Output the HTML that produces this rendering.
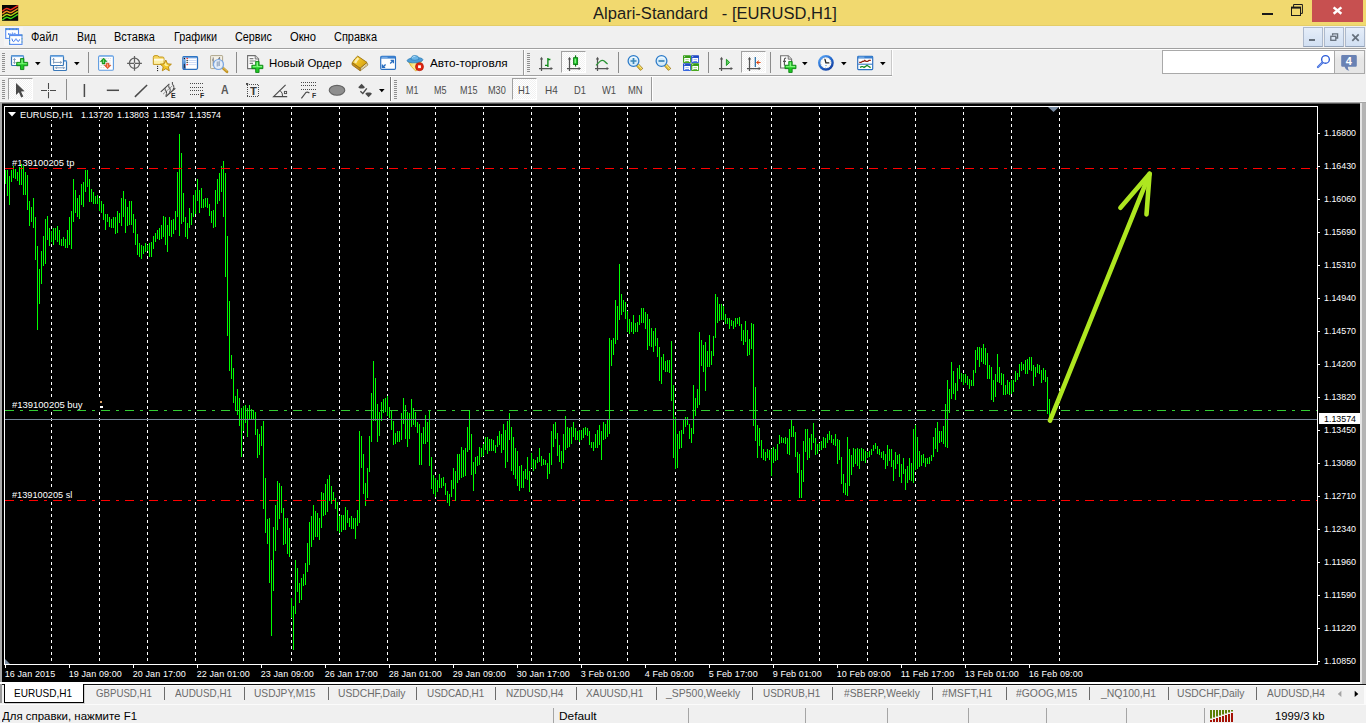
<!DOCTYPE html>
<html lang="ru"><head><meta charset="utf-8"><title>Alpari-Standard - [EURUSD,H1]</title>
<style>
html,body{margin:0;padding:0}
body{width:1366px;height:723px;overflow:hidden;background:#f0f0f0;position:relative;font-family:"Liberation Sans", sans-serif}
.t{position:absolute;white-space:pre;transform-origin:0 50%;display:block}
.abs{position:absolute}
svg{position:absolute;overflow:visible}

</style></head><body>
<div class="abs" style="left:0;top:0;width:1366px;height:26px;background:#f1d96f"></div>
<div class="abs" style="left:0;top:25px;width:1366px;height:1px;background:#e4cd68"></div>
<svg style="left:2px;top:5px" width="16" height="16" viewBox="0 0 16 16"><rect width="16.2" height="15.8" fill="#050505"/><path d="M0.3 6.2L3.2 4Q4.9 2.9 6.4 3.9Q8.4 5.3 10 4.2L15.9 0.6" stroke="#f0301c" stroke-width="1.45" fill="none"/><path d="M0.3 9.1L3.2 6.9Q4.9 5.8 6.4 6.8Q8.4 8.2 10 7.1L15.9 3.5" stroke="#f08a1e" stroke-width="1.45" fill="none"/><path d="M0.3 12.0L3.2 9.8Q4.9 8.7 6.4 9.7Q8.4 11.1 10 10.0L15.9 6.3999999999999995" stroke="#b4d414" stroke-width="1.45" fill="none"/><path d="M0.3 15.0L3.2 12.8Q4.9 11.700000000000001 6.4 12.700000000000001Q8.4 14.100000000000001 10 13.0L15.9 9.4" stroke="#3fd818" stroke-width="1.45" fill="none"/></svg>
<span class="t " style="left:592.50px;top:5.20px;font-size:16.3px;line-height:16.3px;color:#1c1c1c;transform:scaleX(1.0168);">Alpari-Standard   - [EURUSD,H1]</span>
<div class="abs" style="left:1262px;top:13px;width:11px;height:2px;background:#1a1a1a"></div>
<svg style="left:1290px;top:3px" width="14" height="14" viewBox="0 0 14 14"><path d="M3.6 4V1.5H12.4V10.4H10.6" fill="none" stroke="#1a1a1a" stroke-width="1"/><rect x="1.5" y="4.5" width="9" height="8" fill="none" stroke="#1a1a1a" stroke-width="1"/><rect x="1" y="3.6" width="10" height="2" fill="#1a1a1a"/></svg>
<div class="abs" style="left:1312px;top:0;width:51px;height:22px;background:#c75050"></div>
<svg style="left:1332px;top:6px" width="11" height="9" viewBox="0 0 11 9"><path d="M1.6 1.4L9.4 7.7M9.4 1.4L1.6 7.7" stroke="#fff" stroke-width="2.5"/></svg>
<div class="abs" style="left:0;top:26px;width:1366px;height:22px;background:#f0f0f0"></div>
<div class="abs" style="left:0;top:48px;width:1366px;height:1px;background:#a0a0a0"></div>
<div class="abs" style="left:0;top:49px;width:1366px;height:1px;background:#fff"></div>
<div class="abs" style="left:4px;top:27px;width:19px;height:19px;background:#f5f5f5"></div><svg style="left:5px;top:28px" width="18" height="17" viewBox="0 0 18 17"><rect x="0.7" y="0.6" width="12.8" height="9.8" fill="#fff" stroke="#5a8cf0" stroke-width="1.1"/><rect x="0.7" y="0.4" width="12.8" height="1.7" fill="#5a8cf0"/><path d="M0.7 1.2H13.5" stroke="#3aa05a" stroke-width="1.2" stroke-dasharray="1 2.4" opacity=".7"/><path d="M3.2 6H6.2M4 5L3 6L4 7M7.4 4.4V7.6M8.6 5.4H10.6" stroke="#5a8cf0" stroke-width=".9" fill="none"/><rect x="4.6" y="6.8" width="12.4" height="9.6" fill="#fff" stroke="#5a8cf0" stroke-width="1.1"/><rect x="4.6" y="6.6" width="12.4" height="1.5" fill="#5a8cf0"/><path d="M4.6 16.4V6.8M17 6.8V16.4" stroke="#3aa05a" stroke-width="1.1" stroke-dasharray="1 2.4" opacity=".6"/><path d="M6.9 10.6Q7.6 14 8.7 13.6Q9.6 13.4 10.4 11.4Q11 10 11.6 11.4Q12.4 13.6 13.2 13.6Q14 13.4 14.6 11.4" stroke="#3f78ee" stroke-width="1" fill="none"/></svg>
<span class="t " style="left:31.00px;top:31.44px;font-size:12px;line-height:12px;color:#000;transform:scaleX(0.9148);">Файл</span>
<span class="t " style="left:77.00px;top:31.44px;font-size:12px;line-height:12px;color:#000;transform:scaleX(0.8748);">Вид</span>
<span class="t " style="left:114.00px;top:31.44px;font-size:12px;line-height:12px;color:#000;transform:scaleX(0.9191);">Вставка</span>
<span class="t " style="left:174.00px;top:31.44px;font-size:12px;line-height:12px;color:#000;transform:scaleX(0.9014);">Графики</span>
<span class="t " style="left:235.00px;top:31.44px;font-size:12px;line-height:12px;color:#000;transform:scaleX(0.9004);">Сервис</span>
<span class="t " style="left:290.00px;top:31.44px;font-size:12px;line-height:12px;color:#000;transform:scaleX(0.9322);">Окно</span>
<span class="t " style="left:334.00px;top:31.44px;font-size:12px;line-height:12px;color:#000;transform:scaleX(0.9134);">Справка</span>
<div class="abs" style="left:1303px;top:27px;width:18px;height:18px;background:linear-gradient(#e6eef9,#dbe6f5 50%,#d2e0f3);border:1px solid #adb9cc;border-bottom-color:#94a3b9"></div>
<div class="abs" style="left:1324px;top:27px;width:18px;height:18px;background:linear-gradient(#e6eef9,#dbe6f5 50%,#d2e0f3);border:1px solid #adb9cc;border-bottom-color:#94a3b9"></div>
<div class="abs" style="left:1345px;top:27px;width:18px;height:18px;background:linear-gradient(#e6eef9,#dbe6f5 50%,#d2e0f3);border:1px solid #adb9cc;border-bottom-color:#94a3b9"></div>
<div class="abs" style="left:1309px;top:39px;width:6px;height:2px;background:#66707c"></div>
<svg style="left:1330px;top:33px" width="9" height="9" viewBox="0 0 9 9"><path d="M2.6 2.6V0.8H7.6V5H6" fill="none" stroke="#66707c" stroke-width="1.3"/><rect x="0.8" y="3.3" width="5" height="4" fill="none" stroke="#66707c" stroke-width="1.3"/></svg>
<svg style="left:1351px;top:33px" width="9" height="9" viewBox="0 0 9 9"><path d="M1.3 1.4L7.7 7.9M7.7 1.4L1.3 7.9" stroke="#66707c" stroke-width="1.7"/></svg>
<div class="abs" style="left:0;top:75px;width:892px;height:1px;background:#a0a0a0"></div>
<div class="abs" style="left:0;top:76px;width:892px;height:1px;background:#fff"></div>
<svg style="left:2px;top:53px" width="3" height="20" viewBox="0 0 3 20" shape-rendering="crispEdges"><rect x="0" y="0" width="3" height="1" fill="#8f8f8f"/><rect x="0" y="2" width="3" height="1" fill="#8f8f8f"/><rect x="0" y="4" width="3" height="1" fill="#8f8f8f"/><rect x="0" y="6" width="3" height="1" fill="#8f8f8f"/><rect x="0" y="8" width="3" height="1" fill="#8f8f8f"/><rect x="0" y="10" width="3" height="1" fill="#8f8f8f"/><rect x="0" y="12" width="3" height="1" fill="#8f8f8f"/><rect x="0" y="14" width="3" height="1" fill="#8f8f8f"/><rect x="0" y="16" width="3" height="1" fill="#8f8f8f"/><rect x="0" y="18" width="3" height="1" fill="#8f8f8f"/></svg>
<svg style="left:11px;top:54px" width="18" height="17" viewBox="0 0 18 17"><rect x="0.5" y="1.5" width="12" height="10" rx="1" fill="#fff" stroke="#3a78b8" stroke-width="1.2"/><rect x="0.5" y="1.5" width="12" height="1.6" fill="#7db2ea"/><path d="M3.5 4.6V9.6M2.2 5.9L3.5 4.6L4.8 5.9M2.2 8.3L3.5 9.6L4.8 8.3" stroke="#7d95b3" stroke-width=".9" fill="none"/><g transform="translate(4.7,4.0) scale(1.06)"><path d="M4.5 0.5H7.7V4.1H11.3V7.3H7.7V10.9H4.5V7.3H0.9V4.1H4.5Z" fill="#1fc824" stroke="#0b7f12" stroke-width="0.8" stroke-linejoin="round"/><path d="M5.3 1.3H6.7V4.9H10.5V6H5.3Z" fill="#8dfb8a" opacity=".9"/><path d="M1.7 4.9H5.3V6H1.7Z" fill="#8dfb8a" opacity=".9"/></g></svg>
<svg style="left:34.5px;top:62px" width="6" height="4" viewBox="0 0 6 4"><path d="M0 0H5.6L2.8 3.2Z" fill="#000"/></svg>
<svg style="left:50px;top:54px" width="18" height="18" viewBox="0 0 18 18"><rect x="3.5" y="6.5" width="13" height="10" rx="1" fill="#fff" stroke="#3a78b8" stroke-width="1.2"/><rect x="3.5" y="6.5" width="13" height="1.4" fill="#7db2ea"/><rect x="0.5" y="1.5" width="13" height="10" rx="1" fill="#fff" stroke="#3a78b8" stroke-width="1.2"/><rect x="0.5" y="1.5" width="13" height="1.6" fill="#7db2ea"/><path d="M3.6 4.4V9.6M3.6 8.4H11.6M2.4 5.6L3.6 4.4L4.8 5.6M10.4 7.2L11.6 8.4L10.4 9.6" stroke="#6f8fb3" stroke-width=".9" fill="none"/><path d="M5.6 13.8H14.4M6.8 12.6L5.6 13.8L6.8 15M13.2 12.6L14.4 13.8L13.2 15" stroke="#6f8fb3" stroke-width=".9" fill="none"/></svg>
<svg style="left:73.5px;top:62px" width="6" height="4" viewBox="0 0 6 4"><path d="M0 0H5.6L2.8 3.2Z" fill="#000"/></svg>
<div class="abs" style="left:88px;top:52px;width:1px;height:21px;background:#8c8c8c"></div>
<svg style="left:98px;top:54px" width="17" height="18" viewBox="0 0 17 18"><rect x="0.6" y="1.7" width="14.8" height="14.6" rx="1.4" fill="#fff" stroke="#5e9be0" stroke-width="1.1"/><rect x="1" y="1.6" width="14" height="1.2" fill="#7fb1ea"/><path d="M2.4 4.6H13M8.6 6.8H13M8.6 9H13M2.4 11.4H6M2.4 13.6H6.4" stroke="#d4d4d4" stroke-width=".8" stroke-dasharray="1.6 .8"/><path d="M5.6 4L9 7.6H7V10H4.2V7.6H2.2Z" fill="#12a31a" stroke="#0a7a10" stroke-width=".5"/><path d="M5.6 5.6V9" stroke="#8be08c" stroke-width=".9"/><path d="M9.6 14.8L6.2 11.2H8.2V9.2H11V11.2H13Z" fill="#f0582a" stroke="#c03c14" stroke-width=".5"/><path d="M9.6 10.2V13.2" stroke="#fbb79e" stroke-width=".9"/></svg>
<svg style="left:126px;top:55px" width="17" height="17" viewBox="0 0 17 17"><circle cx="8.5" cy="8.3" r="5.1" fill="none" stroke="#606060" stroke-width="1.25"/><path d="M8.5 0.9V15.7M1.1 8.3H15.9" stroke="#606060" stroke-width="1.25"/><rect x="8" y="7.8" width="1" height="1" fill="#d8d8d8"/></svg>
<svg style="left:152px;top:54px" width="20" height="18" viewBox="0 0 20 18"><path d="M1.3 3.4Q1.3 1.6 3 1.6H5.2Q6.4 1.6 6.8 3H10.6Q12 3 12 4.4V10.4H1.3Z" fill="#f6d35c" stroke="#c49a22" stroke-width="1"/><path d="M2 4.8H11.4V9.8H2Z" fill="#fdf0a8"/><path d="M2 4.8H11.4V6.6H2Z" fill="#fffbe2"/><rect x="5" y="11.8" width="1.1" height="1.1" fill="#222"/><rect x="5" y="13.9" width="1.1" height="1.1" fill="#222"/><rect x="5" y="16" width="1.1" height="1.1" fill="#222"/><path d="M13.8 6L15.5 9.8L19.4 10.2L16.4 12.8L17.3 16.8L13.8 14.7L10.3 16.8L11.2 12.8L8.2 10.2L12.1 9.8Z" fill="#f1c528" stroke="#b5860e" stroke-width=".9" stroke-linejoin="round"/><path d="M13.8 8.2L14.7 10.7L16.8 10.9L15.2 12.3L13.6 11.9L12.2 10.8Z" fill="#fdf0a0"/></svg>
<svg style="left:182px;top:55px" width="17" height="16" viewBox="0 0 17 16"><defs><linearGradient id="tg" x1="0" y1="0" x2="0" y2="1"><stop offset="0" stop-color="#9cc4f2"/><stop offset=".55" stop-color="#3f86d8"/><stop offset="1" stop-color="#1d4f9c"/></linearGradient></defs><rect x="0.9" y="1.5" width="14.6" height="12.8" rx="1.2" fill="#fff" stroke="#2a6fc0" stroke-width="1.25"/><rect x="0.9" y="1.3" width="14.6" height="1.3" fill="#2f78c8"/><rect x="1.4" y="2.4" width="2.3" height="11.4" fill="url(#tg)"/><rect x="1.8" y="2.9" width="1.2" height="1.2" fill="#111"/><rect x="1.8" y="9" width="1.2" height="3.8" fill="#23364f"/><path d="M5.6 3.5H14.6M5.6 5.5H14.6M5.6 7.5H14.6M5.6 9.6H14.6" stroke="#c9d9f6" stroke-width=".9"/><rect x="4.5" y="2.9" width="1.3" height="1.2" fill="#f01818"/><rect x="4.5" y="9" width="1.3" height="1.2" fill="#f01818"/><rect x="4.5" y="4.9" width="1.3" height="1.2" fill="#2a3a2a"/><rect x="4.5" y="6.9" width="1.3" height="1.2" fill="#2a3a2a"/></svg>
<svg style="left:210px;top:54px" width="19" height="19" viewBox="0 0 19 19"><rect x="0.6" y="1.6" width="12" height="13" rx=".6" fill="#f4f0e6" stroke="#aea58c" stroke-width="1"/><path d="M3.2 3.4V12M2 6H3.2M3.2 8.4H4.6M9.6 3V9M9.6 4.4H8.2M9.6 7H11" stroke="#707070" stroke-width=".9" fill="none"/><path d="M12.6 13.8L17 17.8" stroke="#c29322" stroke-width="2.7" stroke-linecap="round"/><path d="M12.8 13.4L16.6 16.8" stroke="#ecd27a" stroke-width=".8" stroke-linecap="round"/><circle cx="8.5" cy="10.5" r="5" fill="#e3eefb" fill-opacity=".86" stroke="#78a6e6" stroke-width="1.15"/><path d="M7.4 7.6V12.6M9.2 7.2V12" stroke="#a2b2c8" stroke-width="1.6"/></svg>
<div class="abs" style="left:236px;top:52px;width:1px;height:21px;background:#8c8c8c"></div>
<svg style="left:247px;top:54px" width="18" height="19" viewBox="0 0 18 19"><path d="M0.6 1.6H8.2L11.6 5V14.6H0.6Z" fill="#fdfdfd" stroke="#6f6f6f" stroke-width="1.1"/><path d="M8.2 1.6V5H11.6" fill="#d8d8d8" stroke="#6f6f6f" stroke-width=".9"/><path d="M2.6 4.6H6.4M2.6 7H9M2.6 9.4H6" stroke="#7c7c7c" stroke-width="1.1"/><g transform="translate(3.9,6.9) scale(1.06)"><path d="M4.5 0.5H7.7V4.1H11.3V7.3H7.7V10.9H4.5V7.3H0.9V4.1H4.5Z" fill="#1fc824" stroke="#0b7f12" stroke-width="0.8" stroke-linejoin="round"/><path d="M5.3 1.3H6.7V4.9H10.5V6H5.3Z" fill="#8dfb8a" opacity=".9"/><path d="M1.7 4.9H5.3V6H1.7Z" fill="#8dfb8a" opacity=".9"/></g></svg>
<span class="t " style="left:268.50px;top:57.99px;font-size:11px;line-height:11px;color:#000;transform:scaleX(1.0386);">Новый Ордер</span>
<svg style="left:351px;top:55px" width="18" height="17" viewBox="0 0 18 17"><defs><linearGradient id="bk" x1="0" y1="0" x2="1" y2="0.6"><stop offset="0" stop-color="#fff0a0"/><stop offset=".35" stop-color="#f2c62a"/><stop offset="1" stop-color="#d9a514"/></linearGradient></defs><path d="M9.2 13.2L16 7.6L16.9 10L9.2 15.8Z" fill="#f3ead0" stroke="#8a6a1c" stroke-width=".7" stroke-linejoin="round"/><path d="M9.9 14.2L16.3 9.1" stroke="#b9a56a" stroke-width=".6"/><path d="M1.3 7.6Q0.6 9 1.4 10.2L9.2 15.8L9.2 13.1Z" fill="#c8901a" stroke="#8f6510" stroke-width=".8" stroke-linejoin="round"/><path d="M6.7 1.1L16 7.4L9.1 13.1L1.3 7.6Q3.6 3.4 6.7 1.1Z" fill="url(#bk)" stroke="#9a7210" stroke-width=".9" stroke-linejoin="round"/><path d="M6.6 2.6Q4.4 4.6 3 7.2L5.2 8.6Q6.4 5.6 8.4 3.8Z" fill="#fff8cf" opacity=".8"/></svg>
<svg style="left:380px;top:55px" width="17" height="16" viewBox="0 0 17 16"><rect x="0.7" y="1.4" width="14.8" height="13" rx="1.1" fill="#fff" stroke="#2a6fc0" stroke-width="1.15"/><rect x="0.8" y="1.2" width="14.6" height="2.4" fill="#3b80d0"/><rect x="1.6" y="1.9" width="6" height=".7" fill="#9cc4f0"/><path d="M10.2 8.4L13.2 5.6M10.6 5.4H13.4V8.2M5.6 9.4L2.6 12.2M2.4 9.6V12.4H5.2" stroke="#2a6fc0" stroke-width="1.35" fill="none"/></svg>
<svg style="left:406px;top:54px" width="19" height="18" viewBox="0 0 19 18"><defs><linearGradient id="fc" x1="0" y1="0" x2="1" y2="0"><stop offset="0" stop-color="#f6cf3c"/><stop offset=".45" stop-color="#fdec96"/><stop offset="1" stop-color="#ecbc24"/></linearGradient></defs><path d="M2.2 7.2Q4.6 12.6 9.4 16.8Q10 17.2 10.6 16.6Q14 12 15.4 7.2Z" fill="url(#fc)" stroke="#d8a826" stroke-width=".8" stroke-linejoin="round"/><ellipse cx="9" cy="6.2" rx="7.9" ry="2.6" fill="#4f9cd6" stroke="#2f7fb8" stroke-width=".8" transform="rotate(-4 9 6.2)"/><path d="M5 5.6Q5 1.4 9 1.4Q13 1.4 13 5.4Q9 7.2 5 5.6Z" fill="#6cb6e8" stroke="#2f7fb8" stroke-width=".7"/><path d="M6.4 3.6Q7.4 2.2 9.4 2.2" stroke="#b4dcf6" stroke-width="1" fill="none"/><circle cx="13.5" cy="12.7" r="4" fill="#e02410" stroke="#b01404" stroke-width=".7"/><rect x="12.1" y="11.3" width="2.8" height="2.8" fill="#fff"/></svg>
<span class="t " style="left:430.00px;top:57.99px;font-size:11px;line-height:11px;color:#000;transform:scaleX(1.0683);">Авто-торговля</span>
<div class="abs" style="left:523px;top:50px;width:1px;height:25px;background:#9a9a9a"></div>
<div class="abs" style="left:524px;top:50px;width:1px;height:25px;background:#fff"></div>
<svg style="left:527px;top:53px" width="3" height="20" viewBox="0 0 3 20" shape-rendering="crispEdges"><rect x="0" y="0" width="3" height="1" fill="#8f8f8f"/><rect x="0" y="2" width="3" height="1" fill="#8f8f8f"/><rect x="0" y="4" width="3" height="1" fill="#8f8f8f"/><rect x="0" y="6" width="3" height="1" fill="#8f8f8f"/><rect x="0" y="8" width="3" height="1" fill="#8f8f8f"/><rect x="0" y="10" width="3" height="1" fill="#8f8f8f"/><rect x="0" y="12" width="3" height="1" fill="#8f8f8f"/><rect x="0" y="14" width="3" height="1" fill="#8f8f8f"/><rect x="0" y="16" width="3" height="1" fill="#8f8f8f"/><rect x="0" y="18" width="3" height="1" fill="#8f8f8f"/></svg>
<svg style="left:539px;top:55px" width="16" height="17" viewBox="0 0 16 17"><path d="M2.5 3V16M0 13.5H13" stroke="#555" stroke-width="1.25" fill="none"/><path d="M2.5 1.8L0.9 4.4H4.1Z" fill="#555"/><path d="M14 13.5L11.6 11.9V15.1Z" fill="#555"/><path d="M8.9 3V12M8.9 4.5H11.4M8.9 10.4H6" stroke="#0d8a16" stroke-width="1.35" fill="none"/></svg>
<div class="abs" style="left:561px;top:51px;width:23px;height:20px;background-image:repeating-conic-gradient(#fff 0 25%,#f1f1f1 0 50%);background-size:2px 2px;border-left:1px solid #a0a0a0;border-top:1px solid #a0a0a0;border-right:1px solid #fff;border-bottom:1px solid #fff;box-sizing:content-box"></div>
<svg style="left:567px;top:55px" width="16" height="17" viewBox="0 0 16 17"><path d="M2.5 3V16M0 13.5H13" stroke="#555" stroke-width="1.25" fill="none"/><path d="M2.5 1.8L0.9 4.4H4.1Z" fill="#555"/><path d="M14 13.5L11.6 11.9V15.1Z" fill="#555"/><path d="M8.55 0.3V11.6" stroke="#0a7a12" stroke-width="1.2"/><rect x="6.6" y="2.7" width="4" height="6.8" fill="#15bb1f" stroke="#0a7a12" stroke-width=".9"/><rect x="7.5" y="3.6" width="1.6" height="4.6" fill="#7ff082"/></svg>
<svg style="left:595px;top:55px" width="16" height="17" viewBox="0 0 16 17"><path d="M2.5 3V16M0 13.5H13" stroke="#555" stroke-width="1.25" fill="none"/><path d="M2.5 1.8L0.9 4.4H4.1Z" fill="#555"/><path d="M14 13.5L11.6 11.9V15.1Z" fill="#555"/><path d="M1 10.4Q3.6 7.8 5 6.4Q7.2 4.4 9.2 6Q11 7.8 12.6 9" stroke="#2a9434" stroke-width="1.15" fill="none"/></svg>
<div class="abs" style="left:618px;top:52px;width:1px;height:21px;background:#8c8c8c"></div>
<svg style="left:627px;top:54px" width="18" height="18" viewBox="0 0 18 18"><path d="M10.2 10.6L14.8 15.6" stroke="#8a6410" stroke-width="3.6" stroke-linecap="butt"/><path d="M10.2 10.6L14.6 15.4" stroke="#e8c83a" stroke-width="2.4" stroke-linecap="butt"/><path d="M10.6 10.2L14.8 14.8" stroke="#fbf0a8" stroke-width=".8"/><circle cx="6.5" cy="7" r="5.4" fill="#d6ecfa" stroke="#2c7ac8" stroke-width="1.25"/><path d="M3.2 4.6Q6.5 2 9.8 4.6" stroke="#f2fafe" stroke-width="1.2" fill="none"/><path d="M3.5 7H9.5M6.5 4V10" stroke="#3a86b8" stroke-width="1.7"/></svg>
<svg style="left:655px;top:54px" width="18" height="18" viewBox="0 0 18 18"><path d="M10.2 10.6L14.8 15.6" stroke="#8a6410" stroke-width="3.6" stroke-linecap="butt"/><path d="M10.2 10.6L14.6 15.4" stroke="#e8c83a" stroke-width="2.4" stroke-linecap="butt"/><path d="M10.6 10.2L14.8 14.8" stroke="#fbf0a8" stroke-width=".8"/><circle cx="6.5" cy="7" r="5.4" fill="#d6ecfa" stroke="#2c7ac8" stroke-width="1.25"/><path d="M3.2 4.6Q6.5 2 9.8 4.6" stroke="#f2fafe" stroke-width="1.2" fill="none"/><path d="M3.5 7H9.5" stroke="#3a86b8" stroke-width="1.7"/></svg>
<svg style="left:683px;top:55px" width="17" height="17" viewBox="0 0 17 17"><defs><linearGradient id="g02" x1="0" y1="0" x2="0" y2="1"><stop offset="0" stop-color="#2f9a12"/><stop offset="1" stop-color="#4aaa20"/></linearGradient></defs><rect x="0" y="0.2" width="7.9" height="7.8" rx=".7" fill="url(#g02)"/><rect x="1.1" y="1.2" width="1" height=".9" fill="#fff" opacity=".85"/><path d="M1.2 3.1H7V7.0H6V6.2H2.2V7.0H1.2Z" fill="#fff"/><path d="M2.4 4.6000000000000005H5.8" stroke="#9ad47e" stroke-width=".9"/><defs><linearGradient id="g812" x1="0" y1="0" x2="0" y2="1"><stop offset="0" stop-color="#1a44c0"/><stop offset="1" stop-color="#3a6ae0"/></linearGradient></defs><rect x="8.1" y="0.2" width="7.9" height="7.8" rx=".7" fill="url(#g812)"/><rect x="9.2" y="1.2" width="1" height=".9" fill="#fff" opacity=".85"/><path d="M9.299999999999999 3.1H15.1V7.0H14.1V6.2H10.3V7.0H9.299999999999999Z" fill="#fff"/><path d="M10.5 4.6000000000000005H13.899999999999999" stroke="#9ab4ee" stroke-width=".9"/><defs><linearGradient id="g082" x1="0" y1="0" x2="0" y2="1"><stop offset="0" stop-color="#1a44c0"/><stop offset="1" stop-color="#3a6ae0"/></linearGradient></defs><rect x="0" y="8.2" width="7.9" height="7.8" rx=".7" fill="url(#g082)"/><rect x="1.1" y="9.2" width="1" height=".9" fill="#fff" opacity=".85"/><path d="M1.2 11.1H7V15.0H6V14.2H2.2V15.0H1.2Z" fill="#fff"/><path d="M2.4 12.6H5.8" stroke="#9ab4ee" stroke-width=".9"/><defs><linearGradient id="g8182" x1="0" y1="0" x2="0" y2="1"><stop offset="0" stop-color="#2f9a12"/><stop offset="1" stop-color="#4aaa20"/></linearGradient></defs><rect x="8.1" y="8.2" width="7.9" height="7.8" rx=".7" fill="url(#g8182)"/><rect x="9.2" y="9.2" width="1" height=".9" fill="#fff" opacity=".85"/><path d="M9.299999999999999 11.1H15.1V15.0H14.1V14.2H10.3V15.0H9.299999999999999Z" fill="#fff"/><path d="M10.5 12.6H13.899999999999999" stroke="#9ad47e" stroke-width=".9"/></svg>
<div class="abs" style="left:708px;top:52px;width:1px;height:21px;background:#8c8c8c"></div>
<svg style="left:719px;top:55px" width="16" height="17" viewBox="0 0 16 17"><path d="M2.5 3V16M0 13.5H13" stroke="#555" stroke-width="1.25" fill="none"/><path d="M2.5 1.8L0.9 4.4H4.1Z" fill="#555"/><path d="M14 13.5L11.6 11.9V15.1Z" fill="#555"/><path d="M7.4 4.3L10.6 7.4L7.4 10.5Z" fill="#5fd05f" stroke="#1f9a26" stroke-width="1" stroke-linejoin="round"/></svg>
<div class="abs" style="left:741px;top:51px;width:23px;height:20px;background-image:repeating-conic-gradient(#fff 0 25%,#f1f1f1 0 50%);background-size:2px 2px;border-left:1px solid #a0a0a0;border-top:1px solid #a0a0a0;border-right:1px solid #fff;border-bottom:1px solid #fff;box-sizing:content-box"></div>
<svg style="left:747px;top:55px" width="16" height="17" viewBox="0 0 16 17"><path d="M2.5 3V16M0 13.5H13" stroke="#555" stroke-width="1.25" fill="none"/><path d="M2.5 1.8L0.9 4.4H4.1Z" fill="#555"/><path d="M14 13.5L11.6 11.9V15.1Z" fill="#555"/><path d="M8.3 2.1V12" stroke="#1f6aa6" stroke-width="1.2"/><path d="M9.6 7.5H13.6" stroke="#de4a14" stroke-width="1.1"/><path d="M9.1 7.5L11.9 5.1L11.2 7.5L11.9 9.9Z" fill="#de4a14"/></svg>
<div class="abs" style="left:770px;top:52px;width:1px;height:21px;background:#8c8c8c"></div>
<svg style="left:780px;top:54px" width="18" height="19" viewBox="0 0 18 19"><path d="M0.6 1.8H8.2L11.6 5.2V14H0.6Z" fill="#fdfdfd" stroke="#6f6f6f" stroke-width="1.1"/><path d="M8.2 1.8V5.2H11.6" fill="#d8d8d8" stroke="#6f6f6f" stroke-width=".9"/><path d="M6.2 4.2Q4.4 3.8 4.4 6V11.5M3 7.4H6" stroke="#555" stroke-width="1.1" fill="none"/><g transform="translate(4.0,6.9) scale(1.06)"><path d="M4.5 0.5H7.7V4.1H11.3V7.3H7.7V10.9H4.5V7.3H0.9V4.1H4.5Z" fill="#1fc824" stroke="#0b7f12" stroke-width="0.8" stroke-linejoin="round"/><path d="M5.3 1.3H6.7V4.9H10.5V6H5.3Z" fill="#8dfb8a" opacity=".9"/><path d="M1.7 4.9H5.3V6H1.7Z" fill="#8dfb8a" opacity=".9"/></g></svg>
<svg style="left:801.5px;top:62px" width="6" height="4" viewBox="0 0 6 4"><path d="M0 0H5.6L2.8 3.2Z" fill="#000"/></svg>
<svg style="left:817px;top:54px" width="18" height="18" viewBox="0 0 18 18"><defs><linearGradient id="ck" x1="0.1" y1="0" x2="0.9" y2="1"><stop offset="0" stop-color="#5aa4f4"/><stop offset=".5" stop-color="#2268cc"/><stop offset="1" stop-color="#173f9e"/></linearGradient></defs><circle cx="8.9" cy="8.8" r="6.7" fill="#fcfcfc" stroke="url(#ck)" stroke-width="2.4"/><circle cx="8.9" cy="8.8" r="5" fill="none" stroke="#9a9a9a" stroke-width=".8" stroke-dasharray=".7 1.92"/><path d="M8.9 8.9L8 5.4M8.9 8.9H11.8" stroke="#222" stroke-width="1.3" fill="none" stroke-linecap="round"/><path d="M8.2 11.6H9.8" stroke="#6aa6f0" stroke-width=".9"/></svg>
<svg style="left:840.5px;top:62px" width="6" height="4" viewBox="0 0 6 4"><path d="M0 0H5.6L2.8 3.2Z" fill="#000"/></svg>
<svg style="left:857px;top:55px" width="17" height="16" viewBox="0 0 17 16"><rect x="0.7" y="1.4" width="15" height="13.2" rx=".8" fill="#fff" stroke="#2a6fc0" stroke-width="1.15"/><rect x="0.8" y="1.2" width="14.8" height="2.3" fill="#3b80d0"/><rect x="1.8" y="1.8" width="5.6" height=".7" fill="#a4caf2"/><path d="M1.2 9.2H15.2" stroke="#2a6fc0" stroke-width="1"/><path d="M2.2 7.4H4L5.4 6.4H6.6L7.8 5.4L9 6.4H10.6L12 5.4H13.8" stroke="#8e1c0a" stroke-width="1.25" fill="none"/><path d="M3 12.4L4.6 11.6H5.8L7 12.4L8.6 11.4L10 10.2L11.4 11.2L13.6 12.6" stroke="#148a22" stroke-width="1.25" fill="none"/></svg>
<svg style="left:879.5px;top:62px" width="6" height="4" viewBox="0 0 6 4"><path d="M0 0H5.6L2.8 3.2Z" fill="#000"/></svg>
<div class="abs" style="left:891px;top:50px;width:1px;height:25px;background:#c9c9c9"></div>
<div class="abs" style="left:892px;top:50px;width:1px;height:25px;background:#fff"></div>
<svg style="left:2px;top:80px" width="3" height="20" viewBox="0 0 3 20" shape-rendering="crispEdges"><rect x="0" y="0" width="3" height="1" fill="#8f8f8f"/><rect x="0" y="2" width="3" height="1" fill="#8f8f8f"/><rect x="0" y="4" width="3" height="1" fill="#8f8f8f"/><rect x="0" y="6" width="3" height="1" fill="#8f8f8f"/><rect x="0" y="8" width="3" height="1" fill="#8f8f8f"/><rect x="0" y="10" width="3" height="1" fill="#8f8f8f"/><rect x="0" y="12" width="3" height="1" fill="#8f8f8f"/><rect x="0" y="14" width="3" height="1" fill="#8f8f8f"/><rect x="0" y="16" width="3" height="1" fill="#8f8f8f"/><rect x="0" y="18" width="3" height="1" fill="#8f8f8f"/></svg>
<div class="abs" style="left:8px;top:78px;width:23px;height:20px;background-image:repeating-conic-gradient(#fff 0 25%,#f1f1f1 0 50%);background-size:2px 2px;border-left:1px solid #a0a0a0;border-top:1px solid #a0a0a0;border-right:1px solid #fff;border-bottom:1px solid #fff;box-sizing:content-box"></div>
<svg style="left:14px;top:82px" width="12" height="17" viewBox="0 0 12 17"><path d="M2 1V13L4.9 10.3L7.2 15.4L9.3 14.4L7 9.5L10.6 9.2Z" fill="#4a4a4a"/></svg>
<svg style="left:40px;top:82px" width="17" height="17" viewBox="0 0 17 17"><path d="M8.5 1V7M8.5 10V16.2M1 8.5H7M10 8.5H16" stroke="#4a4a4a" stroke-width="1.05"/><rect x="8" y="8" width="1" height="1" fill="#4a4a4a"/></svg>
<div class="abs" style="left:66px;top:79px;width:1px;height:21px;background:#8c8c8c"></div>
<svg style="left:83px;top:83px" width="3" height="15" viewBox="0 0 3 15"><path d="M1.4 1V14" stroke="#4a4a4a" stroke-width="1.5"/></svg>
<svg style="left:106px;top:89px" width="14" height="3" viewBox="0 0 14 3"><path d="M0.8 1.3H13" stroke="#4a4a4a" stroke-width="1.5"/></svg>
<svg style="left:134px;top:84px" width="15" height="14" viewBox="0 0 15 14"><path d="M0.9 12.9L13.1 1" stroke="#4a4a4a" stroke-width="1.5"/></svg>
<svg style="left:160px;top:81px" width="18" height="19" viewBox="0 0 18 19"><path d="M0.8 10.9L9.4 2.9M5.7 15.7L15.3 7.3" stroke="#4a4a4a" stroke-width="1.15"/><path d="M3 13.2L12.6 4.6" stroke="#4a4a4a" stroke-width=".7" opacity=".75"/><path d="M5.2 7.4Q4.6 10.4 6.4 10.2Q7.2 12.6 5.8 14.6M8.8 4.4Q8.2 7.4 10 7.2Q10.8 9.6 9.4 11.6M12.4 1Q11.8 4.4 13.6 4.2Q14.4 6.6 13 8.6" stroke="#4a4a4a" stroke-width="1" fill="none"/></svg>
<span class="t " style="left:171.30px;top:93.41px;font-size:6.6px;line-height:6.6px;color:#222;font-weight:bold;transform:scaleX(1.0440);">E</span>
<svg style="left:190px;top:83px" width="15" height="14" viewBox="0 0 15 14" shape-rendering="crispEdges"><path d="M0 0.5H13" stroke="#4a4a4a" stroke-width="1.1" stroke-dasharray="1 1"/><path d="M0 4.5H13" stroke="#4a4a4a" stroke-width="1.1" stroke-dasharray="1 1"/><path d="M0 7.5H13" stroke="#4a4a4a" stroke-width="1.1" stroke-dasharray="1 1"/><path d="M0 11.5H9" stroke="#4a4a4a" stroke-width="1.1" stroke-dasharray="1 1"/></svg>
<span class="t " style="left:199.90px;top:93.41px;font-size:6.6px;line-height:6.6px;color:#222;font-weight:bold;transform:scaleX(1.0419);">F</span>
<span class="t " style="left:221.00px;top:84.47px;font-size:12.2px;line-height:12.2px;color:#585858;font-weight:bold;transform:scaleX(0.8624);">A</span>
<svg style="left:246px;top:83px" width="14" height="15" viewBox="0 0 14 15"><path d="M1 1.5H13M1 13.5H13M1.5 2V13M12.5 2V13" fill="none" stroke="#4a4a4a" stroke-width="1" stroke-dasharray="1 1" shape-rendering="crispEdges"/><rect x="0" y="0" width="2.2" height="1.9" fill="#4a4a4a"/></svg>
<span class="t " style="left:249.50px;top:85.69px;font-size:11px;line-height:11px;color:#3a3a3a;font-weight:bold;transform:scaleX(1.0394);">T</span>
<svg style="left:272px;top:84px" width="17" height="14" viewBox="0 0 17 14"><path d="M13.6 0.8L1.6 12.6H15.2" stroke="#4a4a4a" stroke-width="1.15" fill="none" stroke-linejoin="miter"/><path d="M8.2 6.6Q10.8 8.8 10.6 12.4" stroke="#4a4a4a" stroke-width="1" fill="none"/><rect x="12.4" y="7.4" width="2.2" height="2.2" fill="#f0f0f0" stroke="#4a4a4a" stroke-width=".9"/></svg>
<svg style="left:301px;top:82px" width="16" height="9" viewBox="0 0 16 9" shape-rendering="crispEdges"><path d="M0 0.5H15" stroke="#4a4a4a" stroke-width="1" stroke-dasharray="1 1"/><path d="M0 3.5H15" stroke="#4a4a4a" stroke-width="1" stroke-dasharray="1 1"/><path d="M0 7.5H15" stroke="#4a4a4a" stroke-width="1" stroke-dasharray="1 1"/></svg>
<svg style="left:300px;top:91px" width="11" height="8" viewBox="0 0 11 8"><path d="M1.4 7.4L5.8 1.6Q7.4 0.6 9.4 2" stroke="#4a4a4a" stroke-width="1.15" fill="none"/></svg>
<span class="t " style="left:311.90px;top:93.24px;font-size:6.8px;line-height:6.8px;color:#333;font-weight:bold;transform:scaleX(1.0105);">F</span>
<svg style="left:328px;top:84px" width="18" height="13" viewBox="0 0 18 13"><ellipse cx="9" cy="6.3" rx="7.8" ry="4.9" fill="#8e8e8e" stroke="#646464" stroke-width="1.1"/></svg>
<svg style="left:357px;top:83px" width="17" height="15" viewBox="0 0 17 15"><path d="M4.6 0.8L8 4.2L6.4 5.6H2.8L1.2 4.2Z" fill="#4a4a4a"/><path d="M11.6 14.2L8.2 10.8L9.8 9.4H13.4L15 10.8Z" fill="#4a4a4a"/><path d="M3.4 8.2L5.8 10.4L9.8 5.4" stroke="#4a4a4a" stroke-width="1.4" fill="none"/></svg>
<svg style="left:378.5px;top:89px" width="6" height="4" viewBox="0 0 6 4"><path d="M0 0H5.6L2.8 3.2Z" fill="#000"/></svg>
<div class="abs" style="left:390px;top:77px;width:1px;height:25px;background:#7a7a7a"></div>
<div class="abs" style="left:391px;top:77px;width:1px;height:25px;background:#fff"></div>
<svg style="left:394px;top:80px" width="3" height="20" viewBox="0 0 3 20" shape-rendering="crispEdges"><rect x="0" y="0" width="3" height="1" fill="#8f8f8f"/><rect x="0" y="2" width="3" height="1" fill="#8f8f8f"/><rect x="0" y="4" width="3" height="1" fill="#8f8f8f"/><rect x="0" y="6" width="3" height="1" fill="#8f8f8f"/><rect x="0" y="8" width="3" height="1" fill="#8f8f8f"/><rect x="0" y="10" width="3" height="1" fill="#8f8f8f"/><rect x="0" y="12" width="3" height="1" fill="#8f8f8f"/><rect x="0" y="14" width="3" height="1" fill="#8f8f8f"/><rect x="0" y="16" width="3" height="1" fill="#8f8f8f"/><rect x="0" y="18" width="3" height="1" fill="#8f8f8f"/></svg>
<div class="abs" style="left:512px;top:78px;width:23px;height:20px;background-image:repeating-conic-gradient(#fff 0 25%,#f1f1f1 0 50%);background-size:2px 2px;border-left:1px solid #a0a0a0;border-top:1px solid #a0a0a0;border-right:1px solid #fff;border-bottom:1px solid #fff;box-sizing:content-box"></div>
<span class="t " style="left:405.80px;top:85.11px;font-size:10.5px;line-height:10.5px;color:#4c4c4c;transform:scaleX(0.8497);">M1</span>
<span class="t " style="left:433.50px;top:85.11px;font-size:10.5px;line-height:10.5px;color:#4c4c4c;transform:scaleX(0.8565);">M5</span>
<span class="t " style="left:459.70px;top:85.11px;font-size:10.5px;line-height:10.5px;color:#4c4c4c;transform:scaleX(0.8563);">M15</span>
<span class="t " style="left:487.50px;top:85.11px;font-size:10.5px;line-height:10.5px;color:#4c4c4c;transform:scaleX(0.8709);">M30</span>
<span class="t " style="left:518.30px;top:85.11px;font-size:10.5px;line-height:10.5px;color:#4c4c4c;transform:scaleX(0.8930);">H1</span>
<span class="t " style="left:545.30px;top:85.11px;font-size:10.5px;line-height:10.5px;color:#4c4c4c;transform:scaleX(0.9451);">H4</span>
<span class="t " style="left:574.40px;top:85.11px;font-size:10.5px;line-height:10.5px;color:#4c4c4c;transform:scaleX(0.8856);">D1</span>
<span class="t " style="left:602.20px;top:85.11px;font-size:10.5px;line-height:10.5px;color:#4c4c4c;transform:scaleX(0.8952);">W1</span>
<span class="t " style="left:628.30px;top:85.11px;font-size:10.5px;line-height:10.5px;color:#4c4c4c;transform:scaleX(0.8933);">MN</span>
<div class="abs" style="left:651px;top:77px;width:1px;height:25px;background:#9a9a9a"></div>
<div class="abs" style="left:652px;top:77px;width:1px;height:25px;background:#fff"></div>
<div class="abs" style="left:1162px;top:50px;width:201px;height:22px;background:#fff;border:1px solid #a9a9a9"></div>
<div class="abs" style="left:1335px;top:51px;width:29px;height:22px;background:linear-gradient(#f3f3f3,#e6e6e6 40%,#e6e6e6);border-left:1px solid #a9a9a9;margin-left:-1px"></div>
<svg style="left:1316px;top:54px" width="15" height="15" viewBox="0 0 15 15"><path d="M6.8 8.3L2 13" stroke="#3a68dc" stroke-width="2.3" stroke-linecap="round"/><path d="M6.8 8.3L2 13" stroke="#9db4f0" stroke-width="1.6" stroke-dasharray=".6 .9"/><circle cx="9.5" cy="5.4" r="3.85" fill="#fff" stroke="#2c5cd8" stroke-width="1.35"/></svg>
<svg style="left:1340px;top:54px" width="18" height="18" viewBox="0 0 18 18"><path d="M2.4 1.1H15.6Q16.8 1.1 16.8 2.3V11.6Q16.8 12.8 15.6 12.8H7.8Q7.6 15.2 9.4 16.8Q5.6 16.4 4.6 12.8H2.4Q1.2 12.8 1.2 11.6V2.3Q1.2 1.1 2.4 1.1Z" fill="#6982b4"/></svg>
<span class="t " style="left:1345.70px;top:55.99px;font-size:11px;line-height:11px;color:#fff;font-weight:bold;">4</span>
<div class="abs" style="left:0;top:101px;width:1366px;height:1px;background:#f6f6f6"></div>
<div class="abs" style="left:0;top:102px;width:1366px;height:1px;background:#a6a6a6"></div>
<div class="abs" style="left:0;top:103px;width:1366px;height:1px;background:#555"></div>
<div class="abs" style="left:0;top:104px;width:1366px;height:578px;background:#000"></div>
<div class="abs" style="left:0;top:103px;width:2px;height:581px;background:#a8a8a8"></div>
<div class="abs" style="left:1360px;top:103px;width:2px;height:581px;background:#e3e3e3"></div>
<div class="abs" style="left:1362px;top:103px;width:4px;height:581px;background:#b4b4b4"></div>
<svg style="left:0;top:0" width="1366" height="723" viewBox="0 0 1366 723" shape-rendering="crispEdges">
<path d="M51.5 106V664M99.5 106V664M147.5 106V664M195.5 106V664M243.5 106V664M291.5 106V664M339.5 106V664M387.5 106V664M435.5 106V664M483.5 106V664M531.5 106V664M579.5 106V664M627.5 106V664M675.5 106V664M723.5 106V664M771.5 106V664M819.5 106V664M867.5 106V664M915.5 106V664M963.5 106V664M1011.5 106V664M1059.5 106V664" stroke="#fff" stroke-width="1" stroke-dasharray="3 3" fill="none"/>
</svg>
<div class="abs" style="left:19px;top:109px;width:203px;height:11px;background:#000"></div>
<span class="t " style="left:20.20px;top:111.08px;font-size:9px;line-height:9px;color:#fff;transform:scaleX(1.0228);">EURUSD,H1</span>
<span class="t " style="left:80.80px;top:111.08px;font-size:9px;line-height:9px;color:#fff;transform:scaleX(0.9832);">1.13720</span>
<span class="t " style="left:116.80px;top:111.08px;font-size:9px;line-height:9px;color:#fff;transform:scaleX(0.9771);">1.13803</span>
<span class="t " style="left:152.60px;top:111.08px;font-size:9px;line-height:9px;color:#fff;transform:scaleX(0.9832);">1.13547</span>
<span class="t " style="left:188.60px;top:111.08px;font-size:9px;line-height:9px;color:#fff;transform:scaleX(0.9832);">1.13574</span>
<svg style="left:8px;top:112px" width="8" height="5" viewBox="0 0 8 5"><path d="M0 0H8L4 4.4Z" fill="#fff"/></svg>
<div class="abs" style="left:10.6px;top:156.7px;width:66.4px;height:13px;background:#000"></div><span class="t " style="left:11.60px;top:159.08px;font-size:9px;line-height:9px;color:#fff;transform:scaleX(1.0389);">#139100205 tp</span>
<div class="abs" style="left:10.6px;top:398.7px;width:89.6px;height:13px;background:#000"></div><span class="t " style="left:11.60px;top:401.08px;font-size:9px;line-height:9px;color:#fff;transform:scaleX(1.0525);">#139100205 buy</span>
<div class="abs" style="left:100px;top:401px;width:2px;height:2px;background:#d9a066"></div><div class="abs" style="left:100px;top:406px;width:3px;height:2px;background:#fff"></div>
<div class="abs" style="left:10.6px;top:488.7px;width:64.4px;height:13px;background:#000"></div><span class="t " style="left:11.60px;top:491.08px;font-size:9px;line-height:9px;color:#fff;transform:scaleX(1.0226);">#139100205 sl</span>
<svg style="left:0;top:0" width="1366" height="723" viewBox="0 0 1366 723" shape-rendering="crispEdges">
<path d="M5.5 170V184M7.5 170V196M9.5 176V205M11.5 170V182M13.5 166V178M15.5 169V179M17.5 172V181M19.5 167V185M21.5 164V185M23.5 166V195M25.5 172V195M27.5 175V210M29.5 201V226M31.5 207V222M33.5 198V228M35.5 217V260M37.5 246V330M39.5 269V304M41.5 251V284M43.5 236V266M45.5 219V264M47.5 216V240M49.5 228V246M51.5 231V242M53.5 228V245M55.5 228V240M57.5 226V242M59.5 230V245M61.5 239V246M63.5 237V246M65.5 239V248M67.5 230V248M69.5 217V245M71.5 211V249M73.5 179V222M75.5 190V213M77.5 198V217M79.5 195V219M81.5 184V205M83.5 182V207M85.5 170V192M87.5 170V187M89.5 179V202M91.5 189V202M93.5 192V204M95.5 196V204M97.5 195V204M99.5 198V211M101.5 201V213M103.5 204V220M105.5 214V230M107.5 214V222M109.5 217V227M111.5 219V228M113.5 217V228M115.5 217V234M117.5 211V233M119.5 213V223M121.5 198V226M123.5 191V217M125.5 199V233M127.5 207V226M129.5 201V225M131.5 201V225M133.5 214V233M135.5 219V245M137.5 234V255M139.5 243V257M141.5 245V259M143.5 246V254M145.5 243V252M147.5 245V251M149.5 243V257M151.5 242V257M153.5 236V249M155.5 233V242M157.5 230V239M159.5 228V240M161.5 225V239M163.5 216V237M165.5 217V245M167.5 225V252M169.5 217V236M171.5 220V237M173.5 219V234M175.5 211V230M177.5 172V217M179.5 134V236M181.5 153V224M183.5 193V222M185.5 217V237M187.5 223V239M189.5 208V228M191.5 213V225M193.5 195V217M195.5 190V214M197.5 179V201M199.5 190V213M201.5 188V208M203.5 199V208M205.5 198V207M207.5 198V208M209.5 204V216M211.5 211V223M213.5 210V228M215.5 190V227M217.5 179V204M219.5 173V201M221.5 166V192M223.5 161V217M225.5 173V277M227.5 236V336M229.5 301V371M231.5 355V379M233.5 368V403M235.5 396V411M237.5 389V415M239.5 398V426M241.5 408V457M243.5 406V431M245.5 405V423M247.5 408V437M249.5 405V419M251.5 409V419M253.5 410V419M255.5 412V435M257.5 429V458M259.5 434V455M261.5 426V446M263.5 421V509M265.5 478V533M267.5 519V544M269.5 518V583M271.5 560V636M273.5 527V591M275.5 505V551M277.5 481V530M279.5 483V519M281.5 486V513M283.5 508V545M285.5 518V544M287.5 518V554M289.5 528V557M291.5 598V618M293.5 606V650M295.5 560V614M297.5 568V592M299.5 583V603M301.5 578V600M303.5 574V586M305.5 563V585M307.5 543V572M309.5 522V565M311.5 516V547M313.5 505V540M315.5 511V537M317.5 513V537M319.5 518V540M321.5 492V528M323.5 493V516M325.5 484V515M327.5 479V512M329.5 475V501M331.5 486V504M333.5 492V501M335.5 498V509M337.5 502V531M339.5 516V533M341.5 515V532M343.5 515V530M345.5 507V530M347.5 510V523M349.5 518V527M351.5 516V529M353.5 518V529M355.5 518V539M357.5 510V526M359.5 431V523M361.5 436V468M363.5 454V494M365.5 483V506M367.5 468V498M369.5 436V472M371.5 393V442M373.5 361V421M375.5 378V421M377.5 404V442M379.5 412V436M381.5 402V421M383.5 399V413M385.5 398V412M387.5 396V416M389.5 407V418M391.5 410V430M393.5 421V445M395.5 433V444M397.5 431V442M399.5 431V442M401.5 413V440M403.5 398V424M405.5 405V439M407.5 412V447M409.5 413V439M411.5 399V427M413.5 408V425M415.5 412V427M417.5 422V433M419.5 424V465M421.5 433V465M423.5 427V444M425.5 415V444M427.5 422V442M429.5 410V466M431.5 457V489M433.5 475V494M435.5 478V497M437.5 480V492M439.5 474V488M441.5 478V488M443.5 477V486M445.5 483V495M447.5 491V503M449.5 494V506M451.5 480V497M453.5 468V489M455.5 471V501M457.5 454V483M459.5 454V480M461.5 447V478M463.5 450V477M465.5 448V476M467.5 427V452M469.5 410V450M471.5 434V475M473.5 462V491M475.5 457V474M477.5 456V466M479.5 447V465M481.5 448V457M483.5 444V456M485.5 437V450M487.5 437V454M489.5 439V451M491.5 439V451M493.5 440V451M495.5 445V453M497.5 436V447M499.5 431V445M501.5 434V453M503.5 424V450M505.5 430V468M507.5 421V462M509.5 413V440M511.5 427V471M513.5 437V475M515.5 448V479M517.5 451V486M519.5 466V491M521.5 465V488M523.5 471V488M525.5 469V479M527.5 457V480M529.5 471V492M531.5 453V468M533.5 459V471M535.5 460V469M537.5 457V463M539.5 448V462M541.5 456V466M543.5 459V465M545.5 460V465M547.5 463V479M549.5 453V474M551.5 431V465M553.5 424V447M555.5 422V439M557.5 433V456M559.5 445V462M561.5 451V469M563.5 434V463M565.5 416V450M567.5 427V448M569.5 428V447M571.5 427V444M573.5 422V437M575.5 428V440M577.5 431V440M579.5 430V442M581.5 430V440M583.5 428V438M585.5 427V435M587.5 428V436M589.5 431V445M591.5 442V448M593.5 442V451M595.5 434V448M597.5 430V448M599.5 425V445M601.5 431V460M603.5 422V440M605.5 424V439M607.5 419V437M609.5 338V434M611.5 340V366M613.5 338V355M615.5 300V344M617.5 306V340M619.5 264V320M621.5 294V315M623.5 300V312M625.5 302V319M627.5 311V332M629.5 319V334M631.5 322V332M633.5 315V334M635.5 323V332M637.5 322V332M639.5 315V325M641.5 308V323M643.5 308V323M645.5 312V329M647.5 314V350M649.5 319V346M651.5 328V347M653.5 331V352M655.5 328V346M657.5 338V357M659.5 347V381M661.5 357V384M663.5 354V370M665.5 361V372M667.5 360V372M669.5 360V373M671.5 341V401M673.5 385V458M675.5 417V469M677.5 434V468M679.5 431V449M681.5 430V448M683.5 419V434M685.5 417V427M687.5 417V425M689.5 424V439M691.5 428V443M693.5 385V434M695.5 398V416M697.5 389V408M699.5 332V405M701.5 340V366M703.5 345V372M705.5 342V391M707.5 351V367M709.5 335V367M711.5 351V365M713.5 336V356M715.5 294V338M717.5 297V323M719.5 304V321M721.5 304V320M723.5 306V320M725.5 314V324M727.5 318V324M729.5 318V329M731.5 320V326M733.5 321V329M735.5 318V327M737.5 318V324M739.5 317V326M741.5 324V341M743.5 330V345M745.5 321V342M747.5 330V356M749.5 339V355M751.5 323V349M753.5 324V426M755.5 387V441M757.5 425V458M759.5 428V446M761.5 440V458M763.5 449V460M765.5 452V461M767.5 449V458M769.5 450V460M771.5 449V476M773.5 447V463M775.5 449V461M777.5 444V460M779.5 435V444M781.5 437V443M783.5 438V443M785.5 437V444M787.5 438V454M789.5 429V455M791.5 419V437M793.5 426V437M795.5 432V457M797.5 452V473M799.5 454V498M801.5 470V498M803.5 441V482M805.5 429V452M807.5 429V460M809.5 438V458M811.5 434V450M813.5 423V443M815.5 438V455M817.5 444V454M819.5 443V450M821.5 441V450M823.5 437V448M825.5 438V448M827.5 434V443M829.5 431V440M831.5 435V443M833.5 439V445M835.5 434V446M837.5 439V464M839.5 440V460M841.5 457V484M843.5 474V493M845.5 483V495M847.5 437V496M849.5 449V486M851.5 455V475M853.5 448V467M855.5 449V464M857.5 448V466M859.5 449V469M861.5 448V461M863.5 449V461M865.5 451V463M867.5 452V458M869.5 451V457M871.5 449V455M873.5 445V451M875.5 443V449M877.5 446V454M879.5 449V455M881.5 452V458M883.5 451V460M885.5 454V469M887.5 445V466M889.5 449V461M891.5 449V467M893.5 460V481M895.5 452V469M897.5 455V464M899.5 454V477M901.5 464V483M903.5 458V474M905.5 469V490M907.5 466V483M909.5 458V480M911.5 463V481M913.5 429V483M915.5 425V470M917.5 437V469M919.5 451V467M921.5 455V466M923.5 454V463M925.5 458V467M927.5 458V464M929.5 457V464M931.5 455V461M933.5 437V457M935.5 428V449M937.5 422V452M939.5 431V443M941.5 431V442M943.5 426V444M945.5 404V447M947.5 380V448M949.5 389V413M951.5 362V399M953.5 371V394M955.5 383V400M957.5 368V391M959.5 365V379M961.5 373V382M963.5 374V385M965.5 374V383M967.5 376V385M969.5 379V389M971.5 380V386M973.5 370V386M975.5 350V373M977.5 347V360M979.5 347V367M981.5 348V362M983.5 344V364M985.5 348V365M987.5 353V379M989.5 365V379M991.5 367V400M993.5 380V402M995.5 374V397M997.5 354V382M999.5 367V383M1001.5 373V385M1003.5 374V395M1005.5 385V395M1007.5 380V394M1009.5 382V395M1011.5 380V394M1013.5 380V392M1015.5 371V382M1017.5 373V380M1019.5 364V377M1021.5 362V371M1023.5 364V370M1025.5 360V374M1027.5 359V374M1029.5 357V370M1031.5 357V371M1033.5 365V386M1035.5 367V377M1037.5 364V373M1039.5 365V374M1041.5 370V383M1043.5 368V380M1045.5 370V382M1047.5 377V414M1049.5 399V418" stroke="#00ff00" stroke-width="1" fill="none"/>
<path d="M5 168.5H1317M5 500.5H1317" stroke="#ff0000" stroke-width="1" stroke-dasharray="9 6 3 6" fill="none"/>
<path d="M5 410.5H1317" stroke="#32cd32" stroke-width="1" stroke-dasharray="9 6 3 6" fill="none"/>
<path d="M5 419.5H1317" stroke="#778899" stroke-width="1" fill="none"/>
<path d="M4.5 106V664.5H1317.5V106M4 106.5H1318" stroke="#fff" stroke-width="1" fill="none"/>
<path d="M1318 133.5H1320M1318 166.5H1320M1318 199.5H1320M1318 232.5H1320M1318 265.5H1320M1318 298.5H1320M1318 331.5H1320M1318 364.5H1320M1318 397.5H1320M1318 430.5H1320M1318 463.5H1320M1318 496.5H1320M1318 529.5H1320M1318 562.5H1320M1318 595.5H1320M1318 628.5H1320M1318 661.5H1320" stroke="#fff" stroke-width="1" fill="none"/>
<path d="M5.5 665V668M69.5 665V668M133.5 665V668M197.5 665V668M261.5 665V668M325.5 665V668M389.5 665V668M453.5 665V668M517.5 665V668M581.5 665V668M645.5 665V668M709.5 665V668M773.5 665V668M837.5 665V668M901.5 665V668M965.5 665V668M1029.5 665V668" stroke="#fff" stroke-width="1" fill="none"/>
<path d="M1048 107H1059L1053.5 112Z" fill="#7b8da3" shape-rendering="auto"/>
<path d="M5 659V664H10Z" fill="#7b8da3" shape-rendering="auto"/>
<rect x="1319" y="413" width="41" height="11" fill="#fff"/>
<g shape-rendering="auto" stroke="#aee620" stroke-width="4.6" stroke-linecap="round" stroke-linejoin="round" fill="none"><path d="M1050 420.6L1149.6 173.8"/><path d="M1120.4 207.8L1149.6 173.8L1146.5 214.4"/></g>
</svg>
<span class="t " style="left:1323.50px;top:129.08px;font-size:9px;line-height:9px;color:#fff;transform:scaleX(0.9832);">1.16800</span>
<span class="t " style="left:1323.50px;top:162.08px;font-size:9px;line-height:9px;color:#fff;transform:scaleX(0.9832);">1.16430</span>
<span class="t " style="left:1323.50px;top:195.08px;font-size:9px;line-height:9px;color:#fff;transform:scaleX(0.9832);">1.16060</span>
<span class="t " style="left:1323.50px;top:228.08px;font-size:9px;line-height:9px;color:#fff;transform:scaleX(0.9832);">1.15690</span>
<span class="t " style="left:1323.50px;top:261.08px;font-size:9px;line-height:9px;color:#fff;transform:scaleX(0.9832);">1.15310</span>
<span class="t " style="left:1323.50px;top:294.08px;font-size:9px;line-height:9px;color:#fff;transform:scaleX(0.9832);">1.14940</span>
<span class="t " style="left:1323.50px;top:327.08px;font-size:9px;line-height:9px;color:#fff;transform:scaleX(0.9832);">1.14570</span>
<span class="t " style="left:1323.50px;top:360.08px;font-size:9px;line-height:9px;color:#fff;transform:scaleX(0.9832);">1.14200</span>
<span class="t " style="left:1323.50px;top:393.08px;font-size:9px;line-height:9px;color:#fff;transform:scaleX(0.9832);">1.13820</span>
<span class="t " style="left:1323.50px;top:426.08px;font-size:9px;line-height:9px;color:#fff;transform:scaleX(0.9832);">1.13450</span>
<span class="t " style="left:1323.50px;top:459.08px;font-size:9px;line-height:9px;color:#fff;transform:scaleX(0.9832);">1.13080</span>
<span class="t " style="left:1323.50px;top:492.08px;font-size:9px;line-height:9px;color:#fff;transform:scaleX(0.9832);">1.12710</span>
<span class="t " style="left:1323.50px;top:525.08px;font-size:9px;line-height:9px;color:#fff;transform:scaleX(0.9832);">1.12340</span>
<span class="t " style="left:1323.50px;top:558.08px;font-size:9px;line-height:9px;color:#fff;transform:scaleX(1.0039);">1.11960</span>
<span class="t " style="left:1323.50px;top:591.08px;font-size:9px;line-height:9px;color:#fff;transform:scaleX(1.0039);">1.11590</span>
<span class="t " style="left:1323.50px;top:624.08px;font-size:9px;line-height:9px;color:#fff;transform:scaleX(1.0039);">1.11220</span>
<span class="t " style="left:1323.50px;top:657.08px;font-size:9px;line-height:9px;color:#fff;transform:scaleX(0.9832);">1.10850</span>
<span class="t " style="left:1323.50px;top:415.08px;font-size:9px;line-height:9px;color:#000;transform:scaleX(0.9832);">1.13574</span>
<span class="t " style="left:4.70px;top:670.28px;font-size:9px;line-height:9px;color:#fff;letter-spacing:0.1px;">16 Jan 2015</span>
<span class="t " style="left:68.70px;top:670.28px;font-size:9px;line-height:9px;color:#fff;letter-spacing:0.1px;">19 Jan 09:00</span>
<span class="t " style="left:132.70px;top:670.28px;font-size:9px;line-height:9px;color:#fff;letter-spacing:0.1px;">20 Jan 17:00</span>
<span class="t " style="left:196.70px;top:670.28px;font-size:9px;line-height:9px;color:#fff;letter-spacing:0.1px;">22 Jan 01:00</span>
<span class="t " style="left:260.70px;top:670.28px;font-size:9px;line-height:9px;color:#fff;letter-spacing:0.1px;">23 Jan 09:00</span>
<span class="t " style="left:324.70px;top:670.28px;font-size:9px;line-height:9px;color:#fff;letter-spacing:0.1px;">26 Jan 17:00</span>
<span class="t " style="left:388.70px;top:670.28px;font-size:9px;line-height:9px;color:#fff;letter-spacing:0.1px;">28 Jan 01:00</span>
<span class="t " style="left:452.70px;top:670.28px;font-size:9px;line-height:9px;color:#fff;letter-spacing:0.1px;">29 Jan 09:00</span>
<span class="t " style="left:516.70px;top:670.28px;font-size:9px;line-height:9px;color:#fff;letter-spacing:0.1px;">30 Jan 17:00</span>
<span class="t " style="left:580.70px;top:670.28px;font-size:9px;line-height:9px;color:#fff;letter-spacing:0.1px;">3 Feb 01:00</span>
<span class="t " style="left:644.70px;top:670.28px;font-size:9px;line-height:9px;color:#fff;letter-spacing:0.1px;">4 Feb 09:00</span>
<span class="t " style="left:708.70px;top:670.28px;font-size:9px;line-height:9px;color:#fff;letter-spacing:0.1px;">5 Feb 17:00</span>
<span class="t " style="left:772.70px;top:670.28px;font-size:9px;line-height:9px;color:#fff;letter-spacing:0.1px;">9 Feb 01:00</span>
<span class="t " style="left:836.70px;top:670.28px;font-size:9px;line-height:9px;color:#fff;letter-spacing:0.1px;">10 Feb 09:00</span>
<span class="t " style="left:900.70px;top:670.28px;font-size:9px;line-height:9px;color:#fff;letter-spacing:0.1px;">11 Feb 17:00</span>
<span class="t " style="left:964.70px;top:670.28px;font-size:9px;line-height:9px;color:#fff;letter-spacing:0.1px;">13 Feb 01:00</span>
<span class="t " style="left:1028.70px;top:670.28px;font-size:9px;line-height:9px;color:#fff;letter-spacing:0.1px;">16 Feb 09:00</span>
<div class="abs" style="left:0;top:682px;width:1366px;height:2px;background:#fff"></div>
<div class="abs" style="left:0;top:684px;width:1366px;height:1px;background:#111"></div>
<div class="abs" style="left:0;top:685px;width:1366px;height:19px;background:#f0f0f0"></div>
<div class="abs" style="left:0;top:684px;width:2px;height:19px;background:#9a9a9a"></div>
<div class="abs" style="left:83px;top:685px;width:1283px;height:1px;background:#fafafa"></div>
<div class="abs" style="left:4px;top:684px;width:78px;height:18px;background:#fff;border:1px solid #000;border-top:none;box-shadow:1px 1px 0 #cfcfcf"></div>
<span class="t " style="left:14.00px;top:687.69px;font-size:11px;line-height:11px;color:#000;transform:scaleX(0.9123);">EURUSD,H1</span>
<span class="t " style="left:95.60px;top:687.69px;font-size:11px;line-height:11px;color:#6b6b6b;transform:scaleX(0.8792);">GBPUSD,H1</span>
<span class="t " style="left:175.00px;top:687.69px;font-size:11px;line-height:11px;color:#6b6b6b;transform:scaleX(0.8965);">AUDUSD,H1</span>
<span class="t " style="left:254.00px;top:687.69px;font-size:11px;line-height:11px;color:#6b6b6b;transform:scaleX(0.9257);">USDJPY,M15</span>
<span class="t " style="left:337.70px;top:687.69px;font-size:11px;line-height:11px;color:#6b6b6b;transform:scaleX(0.9345);">USDCHF,Daily</span>
<span class="t " style="left:427.00px;top:687.69px;font-size:11px;line-height:11px;color:#6b6b6b;transform:scaleX(0.9013);">USDCAD,H1</span>
<span class="t " style="left:506.40px;top:687.69px;font-size:11px;line-height:11px;color:#6b6b6b;transform:scaleX(0.9118);">NZDUSD,H4</span>
<span class="t " style="left:586.40px;top:687.69px;font-size:11px;line-height:11px;color:#6b6b6b;transform:scaleX(0.9116);">XAUUSD,H1</span>
<span class="t " style="left:666.30px;top:687.69px;font-size:11px;line-height:11px;color:#6b6b6b;transform:scaleX(0.9503);">_SP500,Weekly</span>
<span class="t " style="left:762.70px;top:687.69px;font-size:11px;line-height:11px;color:#6b6b6b;transform:scaleX(0.9013);">USDRUB,H1</span>
<span class="t " style="left:843.90px;top:687.69px;font-size:11px;line-height:11px;color:#6b6b6b;transform:scaleX(0.9367);">#SBERP,Weekly</span>
<span class="t " style="left:942.30px;top:687.69px;font-size:11px;line-height:11px;color:#6b6b6b;transform:scaleX(0.9698);">#MSFT,H1</span>
<span class="t " style="left:1015.70px;top:687.69px;font-size:11px;line-height:11px;color:#6b6b6b;transform:scaleX(0.9445);">#GOOG,M15</span>
<span class="t " style="left:1100.60px;top:687.69px;font-size:11px;line-height:11px;color:#6b6b6b;transform:scaleX(0.9485);">_NQ100,H1</span>
<span class="t " style="left:1177.00px;top:687.69px;font-size:11px;line-height:11px;color:#6b6b6b;transform:scaleX(0.9345);">USDCHF,Daily</span>
<span class="t " style="left:1266.70px;top:687.69px;font-size:11px;line-height:11px;color:#6b6b6b;transform:scaleX(0.9107);">AUDUSD,H4</span>
<div class="abs" style="left:164px;top:687px;width:1px;height:13px;background:#6b6b6b"></div>
<div class="abs" style="left:244px;top:687px;width:1px;height:13px;background:#6b6b6b"></div>
<div class="abs" style="left:328px;top:687px;width:1px;height:13px;background:#6b6b6b"></div>
<div class="abs" style="left:416px;top:687px;width:1px;height:13px;background:#6b6b6b"></div>
<div class="abs" style="left:495px;top:687px;width:1px;height:13px;background:#6b6b6b"></div>
<div class="abs" style="left:576px;top:687px;width:1px;height:13px;background:#6b6b6b"></div>
<div class="abs" style="left:656px;top:687px;width:1px;height:13px;background:#6b6b6b"></div>
<div class="abs" style="left:752px;top:687px;width:1px;height:13px;background:#6b6b6b"></div>
<div class="abs" style="left:832px;top:687px;width:1px;height:13px;background:#6b6b6b"></div>
<div class="abs" style="left:932px;top:687px;width:1px;height:13px;background:#6b6b6b"></div>
<div class="abs" style="left:1006px;top:687px;width:1px;height:13px;background:#6b6b6b"></div>
<div class="abs" style="left:1089px;top:687px;width:1px;height:13px;background:#6b6b6b"></div>
<div class="abs" style="left:1168px;top:687px;width:1px;height:13px;background:#6b6b6b"></div>
<div class="abs" style="left:1256px;top:687px;width:1px;height:13px;background:#6b6b6b"></div>
<svg style="left:1337px;top:690px" width="5" height="8" viewBox="0 0 5 8"><path d="M4.4 0.7V7.1L0.8 3.9Z" fill="#a3a3a3"/></svg>
<svg style="left:1354px;top:690px" width="5" height="8" viewBox="0 0 5 8"><path d="M0.7 0.7V7.1L4.3 3.9Z" fill="#000"/></svg>
<div class="abs" style="left:1364px;top:685px;width:2px;height:19px;background:#fbfbfb"></div>
<div class="abs" style="left:1360px;top:682px;width:2px;height:2px;background:#e3e3e3"></div><div class="abs" style="left:1362px;top:682px;width:4px;height:2px;background:#b4b4b4"></div>
<div class="abs" style="left:0;top:704px;width:1366px;height:1px;background:#fbfbfb"></div>
<span class="t " style="left:2.00px;top:710.69px;font-size:11px;line-height:11px;color:#000;transform:scaleX(1.0411);">Для справки, нажмите F1</span>
<span class="t " style="left:559.00px;top:710.69px;font-size:11px;line-height:11px;color:#000;transform:scaleX(1.0786);">Default</span>
<span class="t " style="left:1275.00px;top:710.69px;font-size:11px;line-height:11px;color:#000;transform:scaleX(1.0242);">1999/3 kb</span>
<div class="abs" style="left:553px;top:708px;width:1px;height:15px;background:#a5a5a5"></div>
<div class="abs" style="left:688px;top:708px;width:1px;height:15px;background:#a5a5a5"></div>
<div class="abs" style="left:805px;top:708px;width:1px;height:15px;background:#a5a5a5"></div>
<div class="abs" style="left:887px;top:708px;width:1px;height:15px;background:#a5a5a5"></div>
<div class="abs" style="left:968px;top:708px;width:1px;height:15px;background:#a5a5a5"></div>
<div class="abs" style="left:1046px;top:708px;width:1px;height:15px;background:#a5a5a5"></div>
<div class="abs" style="left:1126px;top:708px;width:1px;height:15px;background:#a5a5a5"></div>
<div class="abs" style="left:1204px;top:708px;width:1px;height:15px;background:#a5a5a5"></div>
<svg style="left:1210px;top:710px" width="24" height="12" viewBox="0 0 24 12"><rect x="0" y="10" width="2" height="2" fill="#a51206"/><rect x="0" y="0" width="2" height="8.5" fill="#5b7d05"/><rect x="3" y="9" width="2" height="3" fill="#a51206"/><rect x="3" y="0" width="2" height="7.5" fill="#5b7d05"/><rect x="6" y="8" width="2" height="4" fill="#a51206"/><rect x="6" y="0" width="2" height="6.5" fill="#5b7d05"/><rect x="9" y="7" width="2" height="5" fill="#a51206"/><rect x="9" y="0" width="2" height="5.5" fill="#5b7d05"/><rect x="12" y="6" width="2" height="6" fill="#a51206"/><rect x="12" y="0" width="2" height="4.5" fill="#5b7d05"/><rect x="15" y="5" width="2" height="7" fill="#a51206"/><rect x="15" y="0" width="2" height="3.5" fill="#5b7d05"/><rect x="18" y="4" width="2" height="8" fill="#a51206"/><rect x="18" y="0" width="2" height="2.5" fill="#5b7d05"/><rect x="21" y="3" width="2" height="9" fill="#a51206"/><rect x="21" y="0" width="2" height="1.5" fill="#5b7d05"/></svg>
</body></html>
